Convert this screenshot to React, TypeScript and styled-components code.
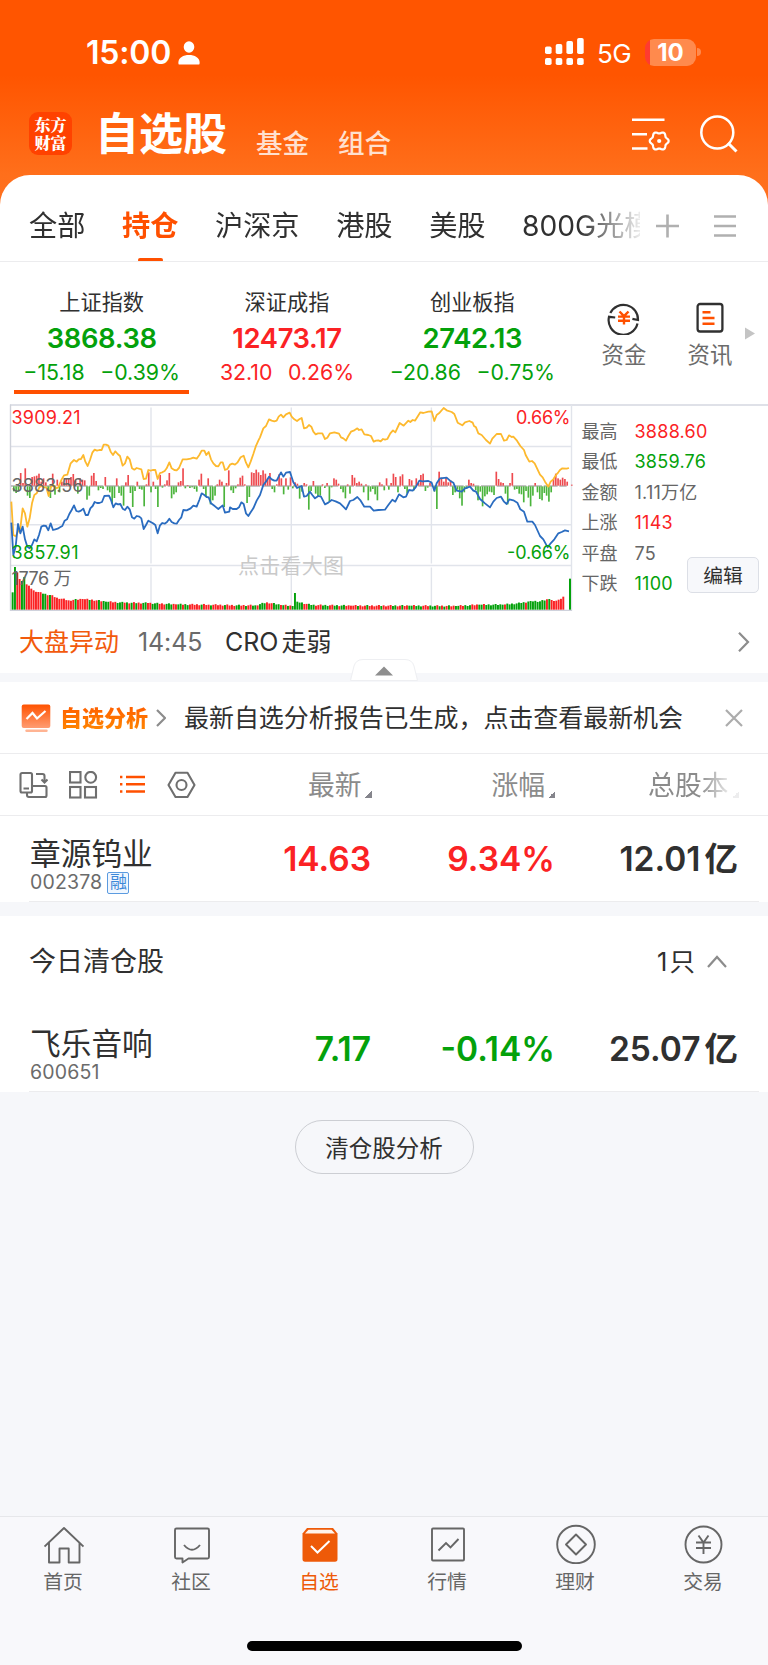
import React from "react";
import styled, { createGlobalStyle } from "styled-components";

const RED = "#fb2224";
const GREEN = "#04a10b";
const ORANGE = "#ff5000";
const INK = "#303030";
const LINE = "#ececee";
const GROUND = "#f6f7fa";

const Global = createGlobalStyle`
  * { box-sizing: border-box; }
  body { margin: 0; background: ${GROUND}; }
`;

const Page = styled.div`
  width: 768px;
  height: 1665px;
  display: flex;
  flex-direction: column;
  overflow: hidden;
  background: ${GROUND};
  color: ${INK};
  font-family: Inter, "Noto Sans CJK SC", sans-serif;
  white-space: nowrap;
`;

const Header = styled.header`
  height: 211px;
  flex: none;
  background: linear-gradient(#ff5500 0, #ff5500 75px, #ff6f1b 175px, #ff7120 100%);
  color: #fff;
`;

const StatusBar = styled.div`
  height: 103px;
  display: flex;
  align-items: center;
  padding: 3px 67px 0 86px;
`;

const Clock = styled.span`
  font-size: 32px;
  font-weight: 600;
  line-height: 40px;
  letter-spacing: -0.2px;
  width: 92px;
`;

const Network = styled.span`
  margin: 1px 13px 0 13px;
  width: 35px;
  font-size: 26px;
  font-weight: 400;
  line-height: 30px;
  letter-spacing: -0.5px;
`;

const Spacer = styled.div`
  flex: 1;
`;

const Battery = styled.div`
  display: flex;
  align-items: center;
  gap: 1px;
  margin-bottom: 2px;
`;

const BatteryBody = styled.div`
  width: 51px;
  height: 27px;
  border-radius: 9px;
  background: linear-gradient(90deg, #ff3b30 0 5px, #ff8a4d 5px);
  font-size: 24px;
  font-weight: 700;
  line-height: 27px;
  text-align: center;
  letter-spacing: 0;
`;

const BatteryTip = styled.i`
  width: 4px;
  height: 8px;
  border-radius: 0 4px 4px 0;
  background: #ff8a4d;
`;

const TitleBar = styled.div`
  height: 64px;
  display: flex;
  align-items: flex-start;
  padding: 0 30px 0 29px;
`;

const Logo = styled.div`
  width: 43px;
  height: 43px;
  margin-top: 9px;
  padding-top: 4px;
  border-radius: 9px;
  background: #ff4200;
  font-family: "Noto Serif CJK SC", "Noto Sans CJK SC", serif;
  font-size: 16px;
  font-weight: 900;
  line-height: 17.5px;
  text-align: center;
`;

const Title = styled.h1`
  margin: 5px 0 0 23px;
  width: 161px;
  font-size: 44px;
  font-weight: 700;
  line-height: 52px;
`;

const SubTitle = styled.span`
  width: 82px;
  margin-top: 24px;
  font-size: 26.6px;
  font-weight: 500;
  line-height: 32px;
  color: #ffe0cf;
`;

const HeaderIcons = styled.div`
  display: flex;
  gap: 30px;
  margin-top: 12px;
`;

const Card = styled.section`
  margin-top: -36px;
  height: 87px;
  flex: none;
  display: flex;
  align-items: stretch;
  padding: 0 32px 0 29px;
  border-radius: 30px 30px 0 0;
  border-bottom: 1px solid ${LINE};
  background: #fff;
`;

const Tabs = styled.div`
  display: flex;
  gap: 36.6px;
  width: 611px;
  overflow: hidden;
  mask-image: linear-gradient(90deg, #000 550px, rgba(0, 0, 0, 0.1) 610px);
`;

const Tab = styled.div<{ $active?: boolean }>`
  position: relative;
  height: 86px;
  font-size: 28.2px;
  line-height: 103px;
  font-weight: ${(p) => (p.$active ? 700 : 400)};
  color: ${(p) => (p.$active ? ORANGE : INK)};
  &::after {
    content: "";
    display: ${(p) => (p.$active ? "block" : "none")};
    position: absolute;
    left: 16px;
    bottom: -1px;
    width: 25px;
    height: 4px;
    border-radius: 2px;
    background: ${ORANGE};
  }
`;

const TabTools = styled.div`
  display: flex;
  align-items: center;
  gap: 34px;
  padding: 16px 0 0 15px;
`;

const Indices = styled.section`
  height: 142px;
  flex: none;
  display: flex;
  padding: 0 13px 0 9px;
  background: #fff;
`;

const IndexCell = styled.div<{ $up?: boolean; $active?: boolean }>`
  width: 185.5px;
  height: 132px;
  display: flex;
  flex-direction: column;
  align-items: center;
  padding-top: 27px;
  color: ${(p) => (p.$up ? RED : GREEN)};
  background: ${(p) =>
    p.$active ? `linear-gradient(${ORANGE}, ${ORANGE}) 5px 128px / 175px 4px no-repeat` : "none"};
`;

const IndexName = styled.span`
  font-size: 21.2px;
  line-height: 26px;
  color: ${INK};
`;

const IndexValue = styled.strong`
  font-size: 27.4px;
  line-height: 32px;
  margin-top: 7px;
  font-weight: 600;
  letter-spacing: -0.35px;
`;

const IndexMove = styled.div`
  display: flex;
  gap: 15.5px;
  margin-top: 5px;
  font-size: 21.3px;
  line-height: 26px;
  letter-spacing: 0;
`;

const Shortcut = styled.div`
  width: 86px;
  display: flex;
  flex-direction: column;
  align-items: center;
  gap: 6px;
  padding-top: 39px;
  font-size: 22.4px;
  line-height: 28px;
  color: #6b6b6b;
`;

const Shortcuts = styled.div`
  display: flex;
  padding-left: 16px;
`;

const ArrowWrap = styled.div`
  padding-top: 65px;
  margin-left: -8px;
  line-height: 0;
`;

const Market = styled.section`
  height: 208px;
  flex: none;
  display: flex;
  padding-left: 9px;
  background: linear-gradient(#dfe1e8, #dfe1e8) 10px 0 / 758px 2px no-repeat #fff;
`;

const Stats = styled.dl`
  margin: 0;
  width: 195px;
  padding: 13px 0 0 8.5px;
  font-size: 18px;
`;

const StatRow = styled.div`
  height: 30.4px;
  display: flex;
  line-height: 30px;
`;

const StatLabel = styled.dt`
  width: 53px;
  color: #666;
`;

const StatValue = styled.dd<{ $color: string }>`
  margin: 0;
  letter-spacing: 0.25px;
  color: ${(p) => p.$color};
`;

const EditButton = styled.button`
  position: absolute;
  left: 687px;
  top: 557px;
  width: 72px;
  height: 36px;
  padding: 0;
  border: 1px solid #dcdfe6;
  border-radius: 5px;
  background: #f7f8fb;
  color: ${INK};
  font: 400 19.8px/32px "Noto Sans CJK SC", sans-serif;
`;

const News = styled.section`
  position: relative;
  height: 70px;
  flex: none;
  display: flex;
  padding: 0 18px 2px 19px;
  align-items: center;
  border-bottom: 9px solid ${GROUND};
  background: #fff;
  font-size: 25px;
  line-height: 30px;
`;

const NewsTag = styled.span`
  width: 119px;
  color: #f25a0c;
`;

const NewsTime = styled.span`
  width: 87px;
  color: #6b6b6b;
  letter-spacing: -0.1px;
`;

const NewsText = styled.span`
  flex: 1;
  display: flex;
  gap: 3px;
`;

const Handle = styled.svg`
  position: absolute;
  left: 349px;
  top: 46px;
`;

const Report = styled.section`
  height: 72px;
  flex: none;
  display: flex;
  align-items: center;
  padding: 1px 25px 0 21px;
  border-bottom: 1px solid ${LINE};
  background: #fff;
`;

const ReportTag = styled.strong`
  width: 88px;
  margin: 0 8px 0 8px;
  font-size: 22px;
  line-height: 30px;
  font-weight: 900;
  background: linear-gradient(#ff5a00, #ff8a00);
  background-clip: text;
  color: transparent;
`;

const ReportText = styled.span`
  flex: 1;
  margin-left: 18px;
  font-size: 25px;
  line-height: 32px;
  letter-spacing: -0.05px;
`;

const TableHead = styled.section`
  height: 62px;
  flex: none;
  display: flex;
  align-items: center;
  padding: 0 29px 0 19px;
  border-bottom: 1px solid ${LINE};
  background: #fff;
`;

const ViewModes = styled.div`
  display: flex;
  width: 177px;
  justify-content: space-between;
`;

const ColumnTitle = styled.div<{ $width: number; $faded?: boolean }>`
  width: ${(p) => p.$width}px;
  display: flex;
  justify-content: flex-end;
  align-items: center;
  gap: 3px;
  font-size: 26.8px;
  line-height: 36px;
  color: #8b8b8b;
  mask-image: ${(p) => (p.$faded ? "linear-gradient(90deg, #000 calc(100% - 40px), rgba(0,0,0,.15) calc(100% - 8px))" : "none")};
`;

const SortMark = styled.i`
  width: 7px;
  height: 7px;
  margin-top: 20px;
  background: linear-gradient(135deg, transparent 50%, #85858c 50%);
`;

const StockRow = styled.section`
  height: 86px;
  flex: none;
  display: flex;
  padding-left: 30px;
  background: linear-gradient(${LINE}, ${LINE}) 29px 85px / 730px 1px no-repeat #fff;
`;

const StockIdentity = styled.div`
  width: 211px;
  padding-top: 19px;
`;

const StockName = styled.div`
  font-size: 30.7px;
  line-height: 38px;
  height: 37px;
`;

const StockCode = styled.div`
  display: flex;
  align-items: center;
  gap: 5px;
  height: 21px;
  font-size: 19.5px;
  line-height: 21px;
  letter-spacing: 0.15px;
  color: #6b6b6b;
`;

const MarginBadge = styled.span`
  width: 22px;
  height: 22px;
  border: 1.5px solid #5b9be0;
  border-radius: 2px;
  background: #f0f7ff;
  color: #3d88d8;
  font-size: 17px;
  line-height: 18px;
  letter-spacing: 0;
  text-align: center;
  text-indent: 0.5px;
`;

const StockValue = styled.div<{ $width: number; $color?: string }>`
  width: ${(p) => p.$width}px;
  display: flex;
  justify-content: flex-end;
  gap: 4px;
  font-size: 33.5px;
  font-weight: 600;
  line-height: 86px;
  color: ${(p) => p.$color ?? INK};
`;

const ClearedHead = styled.section`
  height: 90px;
  flex: none;
  margin-top: 14px;
  padding: 1px 41px 0 29px;
  display: flex;
  align-items: center;
  gap: 12px;
  background: #fff;
  font-size: 27px;
  line-height: 36px;
`;

const ClearedCount = styled.span`
  display: flex;
  gap: 2px;
  font-size: 25.5px;
`;

const AnalysisArea = styled.main`
  flex: 1;
  display: flex;
  justify-content: center;
  align-items: flex-start;
  padding-top: 28px;
`;

const AnalysisButton = styled.button`
  width: 179px;
  height: 54px;
  padding: 0;
  border: 1px solid #ccced3;
  border-radius: 27px;
  background: transparent;
  color: ${INK};
  font: 400 23.5px/48px "Noto Sans CJK SC", sans-serif;
`;

const TabBar = styled.nav`
  height: 149px;
  flex: none;
  display: flex;
  flex-direction: column;
  align-items: center;
  justify-content: space-between;
  padding-bottom: 14px;
  border-top: 1px solid #e6e7ea;
  background: #f8f8fb;
`;

const TabBarItems = styled.div`
  display: flex;
  width: 768px;
`;

const TabBarItem = styled.div<{ $active?: boolean }>`
  width: 128px;
  display: flex;
  flex-direction: column;
  align-items: center;
  padding-top: 7px;
  font-size: 19.8px;
  line-height: 28px;
  color: ${(p) => (p.$active ? "#ee5a08" : "#666")};
  span { margin: 4px 2px 0 0; }
`;

const HomeIndicator = styled.div`
  width: 275px;
  height: 10px;
  border-radius: 5px;
  background: #000;
`;

/* Chart series are plotted on a 3x grid: x from 33 to 1713, y from 15 to 630. */
const AVERAGE_LINE =
  "34,305 40,405 47,409 54,395 61,385 68,325 75,340 82,380 89,355 96,310 103,285 110,280 118,262 125,258 132,262 139,262 146,288 152,262 160,255 168,265 175,262 185,238 192,226 202,224 212,190 222,180 230,185 236,178 243,177 250,165 256,185 263,198 270,180 277,158 284,149 291,152 298,150 305,150 311,134 318,134 325,137 332,155 339,165 346,154 353,162 360,168 368,197 375,190 382,170 389,178 396,205 403,209 410,204 424,208 431,237 438,236 445,210 452,212 458,210 466,210 473,237 480,219 487,217 494,213 500,205 508,187 515,205 523,210 530,211 537,204 548,178 560,178 572,176 580,173 590,176 598,165 605,152 613,152 619,165 626,156 633,178 640,190 648,198 655,199 662,187 668,187 675,210 682,207 690,194 697,191 705,194 712,188 722,172 731,167 738,188 745,202 752,185 760,162 767,140 775,122 780,112 790,85 798,78 807,58 815,62 823,64 830,62 836,50 843,44 850,52 858,43 869,38 875,50 883,58 891,63 899,57 905,54 912,85 920,83 927,75 934,80 940,95 947,103 954,100 967,100 975,117 982,113 990,100 1003,97 1017,101 1023,112 1030,115 1038,122 1045,108 1053,95 1061,92 1072,85 1077,90 1085,88 1093,103 1105,105 1113,108 1121,125 1128,122 1135,121 1142,124 1149,117 1155,119 1162,117 1171,100 1179,91 1186,97 1199,69 1211,77 1225,62 1231,66 1238,60 1245,62 1261,37 1270,39 1285,35 1295,34 1303,63 1310,45 1317,40 1331,24 1340,31 1355,36 1363,42 1373,68 1387,76 1395,67 1408,63 1418,68 1422,78 1428,82 1435,100 1445,105 1458,120 1470,131 1477,116 1490,102 1503,102 1512,122 1520,120 1527,106 1535,111 1540,110 1551,122 1561,138 1572,150 1577,165 1588,185 1596,183 1604,190 1620,224 1628,232 1635,245 1645,260 1652,245 1660,238 1668,225 1675,217 1680,210 1687,205 1700,206 1707,204";
const PRICE_LINE =
  "34,368 40,465 47,440 54,372 61,400 68,380 75,418 82,440 89,445 96,435 103,418 110,424 117,405 124,380 131,377 138,378 145,391 152,370 159,390 166,388 173,386 180,382 187,378 194,362 201,358 208,342 215,330 222,316 229,333 236,335 243,332 250,326 257,345 264,345 271,325 278,318 284,306 291,309 298,309 306,306 313,288 327,287 333,300 340,322 347,310 354,313 361,312 368,326 375,330 382,320 389,328 396,352 403,356 410,348 418,350 424,355 431,387 438,375 445,362 452,366 459,370 466,375 473,400 480,376 487,369 494,371 501,366 508,356 515,366 523,370 530,371 537,360 544,352 550,330 560,331 572,325 580,317 590,320 598,300 605,280 613,285 620,291 626,292 633,310 645,319 655,327 668,316 675,338 688,335 690,322 698,327 710,327 717,322 724,307 731,312 738,340 745,348 752,337 760,325 770,302 780,285 790,255 798,245 807,230 815,238 823,242 830,242 836,230 843,217 850,230 858,218 870,216 880,247 891,264 905,258 912,290 920,288 930,275 937,285 945,295 955,288 963,290 975,313 985,308 995,300 1007,304 1020,310 1030,320 1038,328 1050,303 1060,300 1072,291 1082,302 1093,320 1110,320 1121,332 1135,330 1155,329 1165,315 1177,299 1186,305 1197,283 1210,292 1218,290 1227,270 1238,272 1247,262 1258,242 1267,244 1285,243 1295,248 1303,272 1310,250 1320,235 1340,233 1350,242 1360,248 1370,272 1385,275 1395,265 1410,260 1420,272 1428,275 1440,297 1455,310 1470,322 1480,305 1490,294 1503,290 1512,305 1520,312 1528,298 1540,301 1552,308 1561,328 1572,335 1582,365 1597,365 1605,375 1620,408 1630,418 1643,442 1652,430 1663,418 1675,400 1685,396 1695,391 1707,394";

/* One entry per minute; positive bars rise above the zero line. */
const MOMENTUM = [
  -15, -20, -14, 38, 8, 52, -28, -35, 26, 28, 30, 36, 12, 22, 10, -22, -35, 36, -25, 18, -18, 12, 8, 20, 22, 26, 35, 16, -22, 22, 18, 16, -40, -28, 30, 38, 14, -12, -5, -8, 26, -12, -18, -52, -35, 22, -20, -28, -58, 10, 32, -20, -62, -14, 12, -8, -10, -60, 4, 40, -18, 12, -8, -62, 32, -4, 4, 16, 38, -36, -24, -18, 10, 14, 52, -6, 2, -5, -3, -8, -16, 18, 36, -8, -30, 22, -54, -42, -28, 4, 18, 12, -62, 8, 46, -12, -20, -6, 4, 24, 30, 4, -50, -32, 40, 38, 48, 40, 32, 46, 36, 22, 38, -8, -18, 4, 34, 22, -24, 22, -10,
  25, -6, 10, 6, -37, -16, 8, 4, -70, -14, 14, -22, -32, -28, 4, -5, 8, -46, -3, 22, 18, 6, -8, -18, -36, 4, -22, 32, 24, 8, 12, 6, -18, 4, -42, -16, -8, -24, -42, 10, 4, -12, 22, -10, 8, 36, 26, -18, 28, 34, -8, -22, 20, 16, -12, 22, 8, 32, 36, -14, -4, 8, 2, -16, -68, 42, 24, 12, 24, 10, 16, -26, -18, -10, -36, -58, -18, -8, 18, 8, 6, -12, -42, -16, -60, -30, -24, -16, -18, -26, 42, 20, 10, 8, -22, -54, 8, 38, -10, -8, -22, -24, -48, -14, -34, -60, -28, 8, -18, -38, -42, -20, -28, -46, -18, 20, 36, 22, 18, 24, 20, 12, 0, 3,
];

const VOLUME_ANCHORS: [number, number][] = [
  [0, 52], [1, 128], [2, 112], [3, 92], [4, 86], [5, 98], [6, 76], [9, 58], [13, 48], [16, 44], [19, 36], [24, 28], [30, 32],
  [36, 28], [40, 24], [48, 21], [58, 20], [70, 16], [84, 15], [96, 13], [104, 13], [109, 22], [115, 14], [120, 11], [121, 50],
  [122, 24], [128, 14], [145, 12], [170, 12], [190, 11], [200, 15], [210, 15], [218, 20], [222, 26], [226, 25], [230, 32],
  [232, 26], [234, 30], [236, 39],
];
const VOLUME_COLORS = "ggrrggrggrrrrrgrrrgrrrrrgrrrrggrrgrrggrgggrrrgggrgrgrgrrggrrgggrrrg";

const volumeAt = (i: number) => {
  const next = VOLUME_ANCHORS.findIndex(([x]) => x >= i);
  const [x1, y1] = VOLUME_ANCHORS[next];
  if (x1 === i) return y1;
  const [x0, y0] = VOLUME_ANCHORS[next - 1];
  const wobble = ((i * 7) % 5) - 2;
  return y0 + ((y1 - y0) * (i - x0)) / (x1 - x0) + wobble;
};

const volumeColor = (i: number) => {
  if (i >= 231) return "r";
  if (i >= 200) return i % 9 === 4 ? "r" : "g";
  if (i >= 121 && i < 125) return "g";
  if (i > 6 && i < 37) return i === 13 || i === 14 || i === 16 || i === 27 || i === 33 ? "g" : "r";
  return VOLUME_COLORS[i % VOLUME_COLORS.length];
};

const chartFont = 'Inter, "Noto Sans CJK SC", sans-serif';

const MarketChart = () => (
  <svg width="564" height="208" viewBox="9 404 564 208" fontFamily={chartFont}>
    <g stroke="#e1e4eb" strokeWidth="1.4" fill="none">
      <path d="M10.5 446.5H571M10.5 524.7H571M10.5 565.5H571" />
      <path d="M151 407.5V563.5M151 567.5V610M291.3 407.5V563.5M291.3 567.5V610M431.4 407.5V563.5M431.4 567.5V610M571.5 405V611" />
      <path d="M10.5 404.5V611" stroke="#cfd2da" />
      <path d="M10 610.4H572" stroke="#cfd2dc" />
    </g>
    <text x="238" y="573" fontSize="21" fill="#c9c9c9" textLength="106">点击看大图</text>
    <g transform="translate(0 400) scale(.33333)">
      <path d="M33 258H1700" stroke="#8a8a8a" strokeWidth="3.6" strokeDasharray="42 5" fill="none" />
      {MOMENTUM.map((v, i) => (
        <rect key={i} x={39 + i * 6.86} y={v > 0 ? 257 - v : 259} width="5" height={Math.abs(v)} fill={v > 0 ? "#ee4a4f" : "#4bb43c"} />
      ))}
      {Array.from({ length: 237 }, (_, i) => {
        const h = volumeAt(i);
        return <rect key={i} x={35 + i * 7.0} y={629 - h} width="5.8" height={h} fill={volumeColor(i) === "r" ? RED : GREEN} />;
      })}
      <rect x="1707" y="536" width="6" height="93" fill={GREEN} />
      <polyline points={AVERAGE_LINE} fill="none" stroke="#fdb92e" strokeWidth="5.4" strokeLinejoin="round" />
      <polyline points={PRICE_LINE} fill="none" stroke="#2a6cc0" strokeWidth="5.4" strokeLinejoin="round" />
    </g>
    <g fontSize="18">
      <text x="11.5" y="423.500" fill={RED} textLength="69">3909.21</text>
      <text x="11.5" y="491.500" fill="#666" textLength="72">3883.56</text>
      <text x="11.5" y="559" fill={GREEN} textLength="67">3857.91</text>
      <text x="11.5" y="585" fill="#666" textLength="60">1776 万</text>
      <text x="516" y="423.500" fill={RED} textLength="54.5">0.66%</text>
      <text x="507" y="559" fill={GREEN} textLength="63.5">-0.66%</text>
    </g>
  </svg>
);

const PersonIcon = () => (
  <svg width="22" height="24" viewBox="0 0 22 24" fill="#fff">
    <ellipse cx="11" cy="6" rx="5.3" ry="5.7" />
    <path d="M.5 23C-.5 17 5 14 11 14s11.500 3 10.500 9q-.2.600-1 .600H1.500q-.8 0-1-.6z" />
  </svg>
);

const Signal = styled.svg`
  margin-bottom: 3px;
`;

const SignalIcon = () => (
  <Signal width="39" height="27" viewBox="0 0 39 27" fill="#fff">
    {[8.5, 6, 3, 0].map((y, i) => (
      <g key={y}>
        <rect x={i * 10.7} y={y} width="6.6" height={16 - y} rx="1.8" />
        <rect x={i * 10.7} y="20" width="6.6" height="7" rx="1.8" />
      </g>
    ))}
  </Signal>
);

const GEAR_OUTLINE =
  Array.from({ length: 72 }, (_, i) => {
    const a = (i * Math.PI) / 36;
    const r = 8.5 + 0.95 * Math.cos(6 * a);
    return `${i ? "L" : "M"}${(27.2 + r * Math.cos(a)).toFixed(2)} ${(26 + r * Math.sin(a)).toFixed(2)}`;
  }).join("") + "z";

const FilterIcon = () => (
  <svg width="38" height="37" viewBox="0 0 38 37" fill="none" stroke="#fff" strokeWidth="2.600">
    <path d="M0 4.700H32.500M0 19.300H15M0 33.500H15.500" />
    <path d={GEAR_OUTLINE} strokeWidth="2.200" strokeLinejoin="round" />
    <circle cx="27.200" cy="26" r="2.100" fill="#fff" stroke="none" />
  </svg>
);

const SearchIcon = () => (
  <svg width="38" height="38" viewBox="0 0 38 38" fill="none" stroke="#fff" strokeWidth="2.500">
    <circle cx="17.300" cy="17.500" r="16" />
    <path d="M28 28l8.500 8.500" strokeWidth="3" />
  </svg>
);

const FundsIcon = () => (
  <svg width="34" height="34" viewBox="0 0 34 34" fill="none" stroke="#303030" strokeWidth="2.200">
    <path d="M3.300 12A14.600 14.600 0 0 1 31 19l-5.600-1.200" />
    <path d="M30.500 22.500A14.600 14.600 0 0 1 2 15.800l6.200.7" />
    <path d="M12.500 10.500l4.500 4.700 4.500-4.700M11 15.600h12M11 19.800h12M17 15v8.500" stroke={ORANGE} strokeWidth="2.400" />
  </svg>
);

const ArticleIcon = () => (
  <svg width="28" height="34" viewBox="0 0 28 34" fill="none">
    <rect x="1.600" y="3" width="24.800" height="27.500" rx="2.500" stroke="#303030" strokeWidth="2.300" />
    <path d="M6.500 11.300h8M6.500 17h12M6.500 22.800h12" stroke={ORANGE} strokeWidth="2.600" />
  </svg>
);

const Chevron = ({ w, h, d, color = "#8c8c8c" }: { w: number; h: number; d: string; color?: string }) => (
  <svg width={w} height={h} viewBox={`0 0 ${w} ${h}`} fill="none" stroke={color} strokeWidth="2.200">
    <path d={d} />
  </svg>
);

const ReportIcon = () => (
  <svg width="31" height="29" viewBox="0 0 31 29" fill="none">
    <defs>
      <linearGradient id="report" x1="0" y1="0" x2="0" y2="1">
        <stop stopColor="#ff5200" />
        <stop offset="1" stopColor="#ff9c72" />
      </linearGradient>
    </defs>
    <rect x=".7" y=".5" width="28.600" height="23.500" rx="2" fill="url(#report)" />
    <path d="M5.500 15l6-6 4.500 5.500 8.500-7.500" stroke="#fff" strokeWidth="2.200" />
    <path d="M5.500 26.700h20" stroke="#ffb493" strokeWidth="2.400" strokeLinecap="round" />
  </svg>
);

const MODE_STROKE = "#6f6f6f";

const RotateIcon = () => (
  <svg width="29" height="28" viewBox="0 0 29 28" fill="none" stroke={MODE_STROKE} strokeWidth="2.100">
    <rect x="1.500" y="2" width="11.500" height="19.500" rx="1.500" />
    <path d="M4.500 17.500h5.500M8 22v2q0 2 2 2h16q1.500 0 1.500-1.500v-8q0-1.500-1.500-1.500H13M17 3h6.500q2 0 2 2v5.500M22.500 8.500l3 3 3-3" />
  </svg>
);

const GridIcon = () => (
  <svg width="29" height="28" viewBox="0 0 29 28" fill="none" stroke={MODE_STROKE} strokeWidth="2.100">
    <rect x="1" y="1" width="10.500" height="10.500" />
    <circle cx="21.700" cy="6.300" r="5.400" />
    <rect x="1" y="16" width="10.500" height="10.500" />
    <rect x="16" y="16" width="11" height="10.500" />
  </svg>
);

const ListIcon = () => (
  <svg width="27" height="28" viewBox="0 0 27 28" stroke={ORANGE} strokeWidth="2.400">
    <path d="M7 6h19M7 13.300h19M7 20.500h19M1 6h2.400M1 13.300h2.400M1 20.500h2.400" />
  </svg>
);

const HexIcon = () => (
  <svg width="29" height="28" viewBox="0 0 29 28" fill="none" stroke={MODE_STROKE} strokeWidth="2.100">
    <path d="M9 1.800h11.500L27.500 14l-7 12H8.500L1.500 14 8.500 1.800z" strokeLinejoin="round" />
    <circle cx="14.500" cy="14" r="5" />
  </svg>
);

const BarIcon = ({ children }: { children: React.ReactNode }) => (
  <svg width="40" height="40" viewBox="0 0 40 40" fill="none" stroke="#666" strokeWidth="1.900">
    {children}
  </svg>
);

const TAB_BAR = [
  {
    label: "首页",
    icon: <path d="M.5 22.500L20 4l19.500 18.500M5 18.500V38.500H15.500V24.500H24.700V38.500H35.500V18.500" strokeLinejoin="round" />,
  },
  {
    label: "社区",
    icon: (
      <>
        <path d="M4.500 4.500h31q1.500 0 1.500 1.500v27q0 1.500-1.500 1.500H16.500L10.500 38.500V34.500H4.500Q3 34.500 3 33V6q0-1.500 1.500-1.500z" strokeLinejoin="round" />
        <path d="M12 21q8 9.500 16 0" />
      </>
    ),
  },
  {
    label: "自选",
    active: true,
    icon: (
      <>
        <path d="M2.500 9.500L7 4h26l4.500 5.500V35q0 2.800-2.500 2.800H5Q2.500 37.800 2.500 35z" fill="#ee5a08" stroke="none" />
        <path d="M5 9.500l3.500-3.800h23L35 9.500z" fill="#fff3ea" stroke="none" />
        <path d="M11 22l6.500 6.500L29.500 17" stroke="#fff" strokeWidth="2" />
      </>
    ),
  },
  {
    label: "行情",
    icon: (
      <>
        <rect x="4" y="4.500" width="32" height="32" rx="1" />
        <path d="M10.500 26.500l7.500-7.500 4.500 4.500 8-8.500" />
      </>
    ),
  },
  {
    label: "理财",
    icon: (
      <>
        <circle cx="20" cy="20.500" r="18.800" />
        <path d="M20 10.500l10 10-10 10-10-10z" strokeLinejoin="round" />
      </>
    ),
  },
  {
    label: "交易",
    icon: (
      <>
        <circle cx="19.500" cy="20.500" r="18" />
        <path d="M14.500 11.500l5 7 5-7M12 18.500h15M12 24h15M19.500 18v12" />
      </>
    ),
  },
];

const INDICES = [
  { name: "上证指数", value: "3868.38", change: "−15.18", rate: "−0.39%", active: true },
  { name: "深证成指", value: "12473.17", change: "32.10", rate: "0.26%", up: true },
  { name: "创业板指", value: "2742.13", change: "−20.86", rate: "−0.75%" },
];

const STATS: [string, string, string][] = [
  ["最高", "3888.60", RED],
  ["最低", "3859.76", GREEN],
  ["金额", "1.11万亿", "#666"],
  ["上涨", "1143", RED],
  ["平盘", "75", "#666"],
  ["下跌", "1100", GREEN],
];

type StockProps = { name: string; code: string; price: string; rate: string; shares: string; color: string; margin?: boolean };

const Stock = ({ name, code, price, rate, shares, color, margin }: StockProps) => (
  <StockRow>
    <StockIdentity>
      <StockName>{name}</StockName>
      <StockCode>
        {code}
        {margin && <MarginBadge>融</MarginBadge>}
      </StockCode>
    </StockIdentity>
    <StockValue $width={130} $color={color}>{price}</StockValue>
    <StockValue $width={184} $color={color}>{rate}</StockValue>
    <StockValue $width={183}>
      <span>{shares}</span>
      <span>亿</span>
    </StockValue>
  </StockRow>
);

export default function App() {
  return (
    <Page lang="zh-CN">
      <Global />
      <Header>
        <StatusBar>
          <Clock>15:00</Clock>
          <PersonIcon />
          <Spacer />
          <SignalIcon />
          <Network>5G</Network>
          <Battery>
            <BatteryBody>10</BatteryBody>
            <BatteryTip />
          </Battery>
        </StatusBar>
        <TitleBar>
          <Logo>东方<br />财富</Logo>
          <Title>自选股</Title>
          <SubTitle>基金</SubTitle>
          <SubTitle>组合</SubTitle>
          <Spacer />
          <HeaderIcons>
            <FilterIcon />
            <SearchIcon />
          </HeaderIcons>
        </TitleBar>
      </Header>
      <Card>
        <Tabs>
          <Tab>全部</Tab>
          <Tab $active>持仓</Tab>
          <Tab>沪深京</Tab>
          <Tab>港股</Tab>
          <Tab>美股</Tab>
          <Tab>800G光模</Tab>
        </Tabs>
        <TabTools>
          <svg width="24" height="24" viewBox="0 0 24 24" stroke="#b0b0b0" strokeWidth="2.600">
            <path d="M1 12h23M12.500 .5v23" />
          </svg>
          <svg width="23" height="24" viewBox="0 0 23 24" stroke="#b0b0b0" strokeWidth="2.600">
            <path d="M1 2.500h22M1 12h22M1 21.500h22" />
          </svg>
        </TabTools>
      </Card>
      <Indices>
        {INDICES.map((x) => (
          <IndexCell key={x.name} $up={x.up} $active={x.active}>
            <IndexName>{x.name}</IndexName>
            <IndexValue>{x.value}</IndexValue>
            <IndexMove>
              <span>{x.change}</span>
              <span>{x.rate}</span>
            </IndexMove>
          </IndexCell>
        ))}
        <Shortcuts>
          <Shortcut><FundsIcon />资金</Shortcut>
          <Shortcut><ArticleIcon />资讯</Shortcut>
        </Shortcuts>
        <ArrowWrap>
          <svg width="10" height="13" viewBox="0 0 10 13" fill="#c4c4c4"><path d="M0 .5l10 6-10 6z" /></svg>
        </ArrowWrap>
      </Indices>
      <Market>
        <MarketChart />
        <Stats>
          {STATS.map(([label, value, color]) => (
            <StatRow key={label}>
              <StatLabel>{label}</StatLabel>
              <StatValue $color={color}>{value}</StatValue>
            </StatRow>
          ))}
        </Stats>
        <EditButton>编辑</EditButton>
      </Market>
      <News>
        <NewsTag>大盘异动</NewsTag>
        <NewsTime>14:45</NewsTime>
        <NewsText>
          <span>CRO</span>
          <span>走弱</span>
        </NewsText>
        <Chevron w={12} h={20} d="M1 .8l9 9.200-9 9.200" />
        <Handle width="70" height="24" viewBox="0 0 70 24">
          <path d="M1.500 22.500L5 8q2-6.500 9-6.500h42q7 0 9 6.500l3.500 14.500z" fill="#fff" stroke="#eeeff2" />
          <path d="M26 17.500l9-9 9 9z" fill="#8e8e8e" />
        </Handle>
      </News>
      <Report>
        <ReportIcon />
        <ReportTag>自选分析</ReportTag>
        <Chevron w={10} h={18} d="M1 1l8 8-8 8" />
        <ReportText>最新自选分析报告已生成，点击查看最新机会</ReportText>
        <Chevron w={18} h={18} d="M1 1l16 16M17 1L1 17" color="#acacac" />
      </Report>
      <TableHead>
        <ViewModes>
          <RotateIcon />
          <GridIcon />
          <ListIcon />
          <HexIcon />
        </ViewModes>
        <ColumnTitle $width={175.5}>最新<SortMark /></ColumnTitle>
        <ColumnTitle $width={183.5}>涨幅<SortMark /></ColumnTitle>
        <ColumnTitle $width={183.5} $faded>总股本<SortMark /></ColumnTitle>
      </TableHead>
      <Stock name="章源钨业" code="002378" price="14.63" rate="9.34%" shares="12.01" color={RED} margin />
      <ClearedHead>
        今日清仓股
        <Spacer />
        <ClearedCount>
          <span>1</span>
          <span>只</span>
        </ClearedCount>
        <Chevron w={20} h={13} d="M1 12l9-10 9 10" />
      </ClearedHead>
      <Stock name="飞乐音响" code="600651" price="7.17" rate="-0.14%" shares="25.07" color={GREEN} />
      <AnalysisArea>
        <AnalysisButton>清仓股分析</AnalysisButton>
      </AnalysisArea>
      <TabBar>
        <TabBarItems>
          {TAB_BAR.map((t) => (
            <TabBarItem key={t.label} $active={t.active}>
              <BarIcon>{t.icon}</BarIcon>
              <span>{t.label}</span>
            </TabBarItem>
          ))}
        </TabBarItems>
        <HomeIndicator />
      </TabBar>
    </Page>
  );
}
